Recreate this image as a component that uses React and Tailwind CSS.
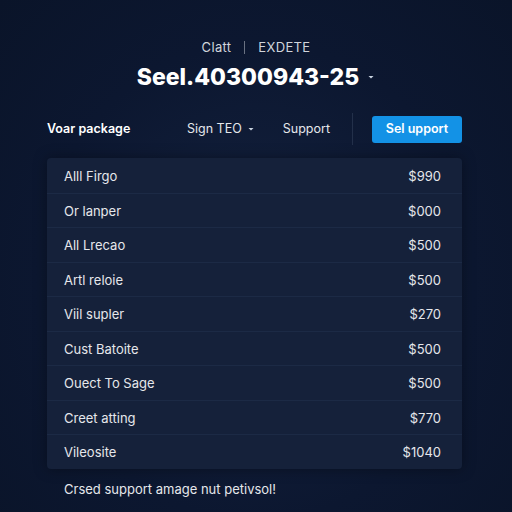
import React from 'react';

const rows = [
  { name: 'Alll Firgo', price: '$990' },
  { name: 'Or lanper', price: '$000' },
  { name: 'All Lrecao', price: '$500' },
  { name: 'Artl reloie', price: '$500' },
  { name: 'Viil supler', price: '$270' },
  { name: 'Cust Batoite', price: '$500' },
  { name: 'Ouect To Sage', price: '$500' },
  { name: 'Creet atting', price: '$770' },
  { name: 'Vileosite', price: '$1040' },
];

const Caret = () => (
  <svg width="8" height="8" viewBox="0 0 8 8" className="inline-block shrink-0">
    <path d="M1.5 3 L4 5.5 L6.5 3 Z" fill="#cbd5e1" />
  </svg>
);

const App = () => {
  return (
    <div
      className="w-[512px] h-[512px] overflow-hidden flex flex-col bg-[radial-gradient(ellipse_at_50%_55%,#14223f_0%,#0c1730_60%,#0a1429_100%)] text-gray-100"
      style={{ fontFamily: 'Inter, "Liberation Sans", sans-serif' }}
    >
      {/* Header */}
      <div className="flex flex-col items-center pt-[38px]">
        <div className="flex items-center gap-[13px] text-[13px] text-gray-300 tracking-wide">
          <span>Clatt</span>
          <span className="w-px h-[13px] bg-gray-500" />
          <span>EXDETE</span>
        </div>
        <div className="flex items-center gap-[8px] mt-[2px]">
          <h1 className="text-[23px] font-extrabold text-white">Seel.40300943-25</h1>
          <Caret />
        </div>
      </div>

      {/* Nav */}
      <div className="flex items-center pl-[47px] pr-[50px] mt-[19px] h-[32px] whitespace-nowrap">
        <span className="w-[140px] shrink-0 text-[12.5px] font-semibold text-white">Voar package</span>
        <div className="flex items-center gap-[5px] text-[12.5px] text-gray-200">
          <span>Sign TEO</span>
          <Caret />
        </div>
        <span className="ml-[28px] text-[12.5px] text-gray-200">Support</span>
        <span className="ml-[22px] w-px h-[32px] bg-[#23304a] shrink-0" />
        <button className="ml-[19px] w-[90px] h-[27px] shrink-0 rounded-[3px] bg-[#1392e6] text-[12.5px] font-semibold text-white">
          Sel upport
        </button>
      </div>

      {/* Table */}
      <div className="ml-[47px] mr-[50px] mt-[13px] rounded-[4px] bg-[#15213a] shadow-[0_0_14px_rgba(0,0,0,0.35)]">
        {rows.map((r, i) => (
          <div
            key={i}
            className={`flex items-center justify-between h-[34.5px] pl-[17px] pr-[21px] pt-[2px] text-[13px] text-gray-200 ${
              i > 0 ? 'border-t border-[#1c2a45]' : ''
            }`}
          >
            <span>{r.name}</span>
            <span>{r.price}</span>
          </div>
        ))}
      </div>

      <p className="px-[64px] mt-[11px] text-[13px] text-gray-200">Crsed support amage nut petivsol!</p>
    </div>
  );
};

export default App;
